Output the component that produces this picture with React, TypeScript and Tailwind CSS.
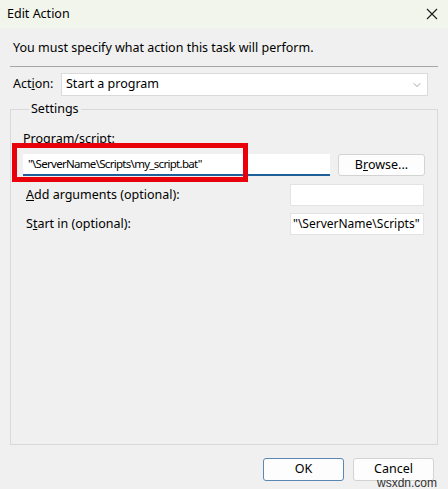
import { ChevronDown } from "lucide-react"

const font = { fontFamily: '"Noto Sans", "Open Sans", sans-serif' }

function Field({ value, className }: { value?: string; className: string }) {
  return (
    <div className={`h-[22px] bg-white border border-[#e3e3e3] flex items-center px-[2px] text-[12px] text-black whitespace-nowrap overflow-hidden ${className}`}>
      {value}
    </div>
  )
}

export default function App() {
  return (
    <div className="w-[448px] h-[489px] bg-[#f0f0f0] flex flex-col text-black relative overflow-hidden" style={font}>
      {/* title bar */}
      <div className="h-[28px] w-full bg-[#f2f5ec] grid grid-cols-[1fr_auto] items-center pl-[7px] pr-[8px]">
        <span className="text-[12.5px]">Edit Action</span>
        <div className="w-[16px] h-[16px] flex items-center justify-center">
          <svg width="12" height="12" viewBox="0 0 12 12">
            <path d="M1 1 L11 11 M11 1 L1 11" stroke="#1a1a1a" strokeWidth="1.1" fill="none" />
          </svg>
        </div>
      </div>

      <div className="flex flex-col px-[10px]">
        <p className="text-[12.5px] mt-[11px] pl-[3px] leading-[17px]">You must specify what action this task will perform.</p>
        <div className="mt-[10px] h-px bg-[#a6a6a6]" />

        <div className="mt-[6px] flex items-center">
          <span className="text-[12.5px] pl-[3px] w-[51px]">
            Act<span className="underline">i</span>on:
          </span>
          <div className="w-[367px] h-[23px] bg-white border border-[#dadada] flex items-center justify-between pl-[4px] pr-[4px] text-[12.5px]">
            Start a program
            <ChevronDown className="h-[12px] w-[12px] text-[#777]" strokeWidth={1.3} />
          </div>
        </div>

        <fieldset className="mt-[6px] h-[343px] border border-[#d9d9d9] px-[12px]">
          <legend className="text-[12.5px] px-[2px] ml-[6px] leading-[14px]">Settings</legend>

          <div className="text-[12.5px] mt-[15px] leading-[16px]">Program/script:</div>
          <div className="mt-[7px] flex items-center">
            <div className="w-[307px] h-[22px] bg-white border-b-2 border-[#1f5f9a] flex items-center pl-[5px] text-[11.5px] tracking-[-0.7px]">
              "\ServerName\Scripts\my_script.bat"
            </div>
            <button className="ml-[8px] w-[87px] h-[22px] bg-[#fdfdfd] border border-[#d3d3d3] rounded-[3px] text-[12.5px]">
              B<span className="underline">r</span>owse...
            </button>
          </div>

          <div className="mt-[8px] flex items-center justify-between">
            <span className="text-[12.5px] pl-[3px]">
              <span className="underline">A</span>dd arguments (optional):
            </span>
            <Field className="w-[134px] mr-[1px]" />
          </div>
          <div className="mt-[7px] flex items-center justify-between">
            <span className="text-[12.5px] pl-[3px]">
              S<span className="underline">t</span>art in (optional):
            </span>
            <Field className="w-[134px] mr-[1px]" value={'"\\ServerName\\Scripts"'} />
          </div>
        </fieldset>

        <div className="mt-[13px] flex justify-end gap-[9px] pr-[4px]">
          <button className="w-[81px] h-[23px] bg-[#fdfdfd] border border-[#5b87b3] rounded-[3px] text-[12.5px]">OK</button>
          <button className="w-[81px] h-[23px] bg-[#fdfdfd] border border-[#d3d3d3] rounded-[3px] text-[12.5px]">Cancel</button>
        </div>
      </div>

      {/* red highlight */}
      <div className="absolute left-[12px] top-[143px] w-[236px] h-[39px] border-[5px] border-[#e8000b] pointer-events-none" />
      <span className="absolute left-[377px] top-[477px] text-[12px] leading-[12px] text-[#333]" style={{ fontFamily: '"Liberation Sans", sans-serif' }}>wsxdn.com</span>
    </div>
  )
}
